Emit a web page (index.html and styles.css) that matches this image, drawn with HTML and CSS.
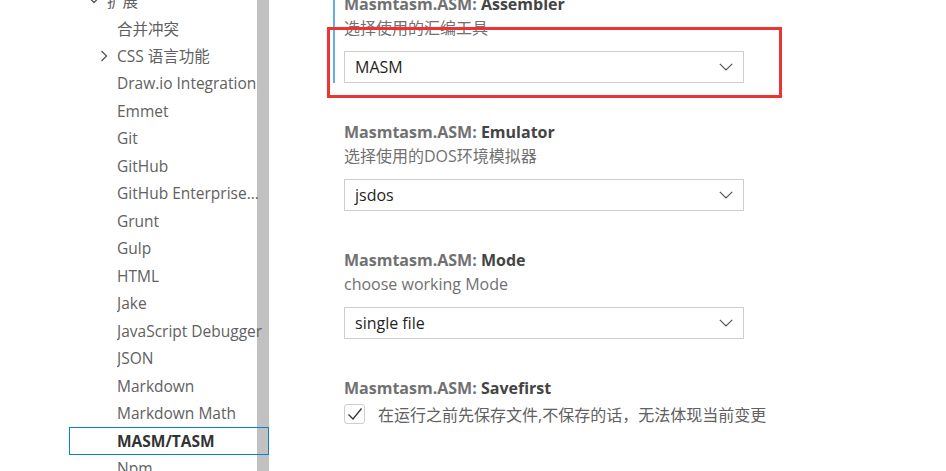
FILE: index.html
```html
<!DOCTYPE html>
<html lang="zh">
<head>
<meta charset="utf-8">
<title>Settings</title>
<link rel="stylesheet" href="styles.css">
</head>
<body>
<div class="page">
  <nav class="toc">
    <div class="scrollbar"></div>
    <ul class="tree">
      <li class="row lvl1"><span class="chev down"><svg viewBox="0 0 12 8" width="12" height="8"><path d="M1 1.5 L6 6.5 L11 1.5" fill="none" stroke="#555" stroke-width="1.3"/></svg></span><span class="label">扩展</span></li>
      <li class="row lvl2"><span class="label">合并冲突</span></li>
      <li class="row lvl2"><span class="chev right"><svg viewBox="0 0 8 12" width="8" height="12"><path d="M1.5 1 L6.5 6 L1.5 11" fill="none" stroke="#555" stroke-width="1.3"/></svg></span><span class="label">CSS 语言功能</span></li>
      <li class="row lvl2"><span class="label">Draw.io Integration</span></li>
      <li class="row lvl2"><span class="label">Emmet</span></li>
      <li class="row lvl2"><span class="label">Git</span></li>
      <li class="row lvl2"><span class="label">GitHub</span></li>
      <li class="row lvl2"><span class="label short">GitHub Enterprise Server Authentication</span></li>
      <li class="row lvl2"><span class="label">Grunt</span></li>
      <li class="row lvl2"><span class="label">Gulp</span></li>
      <li class="row lvl2"><span class="label">HTML</span></li>
      <li class="row lvl2"><span class="label">Jake</span></li>
      <li class="row lvl2"><span class="label">JavaScript Debugger</span></li>
      <li class="row lvl2"><span class="label">JSON</span></li>
      <li class="row lvl2"><span class="label">Markdown</span></li>
      <li class="row lvl2"><span class="label">Markdown Math</span></li>
      <li class="row lvl2 selected"><span class="label">MASM/TASM</span></li>
      <li class="row lvl2"><span class="label">Npm</span></li>
    </ul>
  </nav>
  <main class="settings">
    <section class="setting focused">
      <div class="title"><span class="cat">Masmtasm.ASM: </span><span class="name">Assembler</span></div>
      <div class="desc">选择使用的汇编工具</div>
      <div class="select"><span class="value">MASM</span><svg class="arrow" viewBox="0 0 14 8" width="14" height="8"><path d="M0.8 0.8 L7 7 L13.2 0.8" fill="none" stroke="#555" stroke-width="1.2"/></svg></div>
    </section>
    <section class="setting">
      <div class="title"><span class="cat">Masmtasm.ASM: </span><span class="name">Emulator</span></div>
      <div class="desc">选择使用的DOS环境模拟器</div>
      <div class="select"><span class="value">jsdos</span><svg class="arrow" viewBox="0 0 14 8" width="14" height="8"><path d="M0.8 0.8 L7 7 L13.2 0.8" fill="none" stroke="#555" stroke-width="1.2"/></svg></div>
    </section>
    <section class="setting">
      <div class="title"><span class="cat">Masmtasm.ASM: </span><span class="name">Mode</span></div>
      <div class="desc">choose working Mode</div>
      <div class="select"><span class="value">single file</span><svg class="arrow" viewBox="0 0 14 8" width="14" height="8"><path d="M0.8 0.8 L7 7 L13.2 0.8" fill="none" stroke="#555" stroke-width="1.2"/></svg></div>
    </section>
    <section class="setting">
      <div class="title"><span class="cat">Masmtasm.ASM: </span><span class="name">Savefirst</span></div>
      <div class="check-row">
        <span class="checkbox"><svg viewBox="0 0 18 18" width="18" height="18"><path d="M2.5 9.5 L7 14 L15.5 3.5" fill="none" stroke="#333" stroke-width="1.3"/></svg></span>
        <span class="check-label">在运行之前先保存文件,不保存的话，无法体现当前变更</span>
      </div>
    </section>
  </main>
</div>
<div class="annotation"></div>
</body>
</html>
```

FILE: styles.css
```css
html, body {
  margin: 0;
  padding: 0;
  background: #ffffff;
  overflow: hidden;
}
body {
  width: 946px;
  height: 471px;
  position: relative;
  font-family: "Open Sans", "Noto Sans CJK SC", sans-serif;
  font-size: 16px;
}
.page {
  display: flex;
  height: 471px;
  overflow: hidden;
}
.toc {
  position: relative;
  margin-left: 69px;
  width: 200px;
  flex: none;
  overflow: hidden;
  font-size: 15.5px;
}
.tree {
  position: relative;
  z-index: 1;
  list-style: none;
  margin: -13px 0 0 0;
  padding: 0;
}
.row {
  height: 27.5px;
  display: flex;
  align-items: center;
  box-sizing: border-box;
  color: #616161;
  white-space: nowrap;
  position: relative;
}
.row .label {
  overflow: hidden;
  text-overflow: ellipsis;
  white-space: nowrap;
  display: block;
  max-width: 152px;
}
.row .label.short { max-width: 144px; }
.lvl1 { padding-left: 38px; }
.lvl2 { padding-left: 48px; }
.chev {
  position: absolute;
  display: flex;
  align-items: center;
}
.lvl1 .chev { left: 19px; top: 9px; }
.lvl2 .chev { left: 31px; top: 8px; }
.row.selected {
  border: 1px solid #0a7fd6;
  padding-left: 47px;
  color: #333333;
  font-weight: 700;
}
.scrollbar {
  position: absolute;
  right: 0;
  top: 0;
  width: 12px;
  height: 100%;
  background: #c1c1c1;
  z-index: 0;
}
.settings {
  flex: 1;
  margin-top: -8px;
  padding-left: 64px;
}
.setting {
  border-left: 2px solid transparent;
  padding-left: 9px;
  margin-bottom: 37.5px;
}
.setting.focused {
  border-left-color: #64aee4;
}
.title {
  height: 24px;
  line-height: 24px;
  font-weight: 700;
  white-space: nowrap;
}
.title .cat { color: #717171; }
.title .name { color: #444444; }
.desc {
  height: 24px;
  line-height: 24px;
  color: #717171;
}
.select {
  margin-top: 10.5px;
  width: 400px;
  height: 32px;
  box-sizing: border-box;
  border: 1px solid #cecece;
  display: flex;
  align-items: center;
  justify-content: space-between;
  padding: 0 10px 0 10px;
  color: #1f1f1f;
}
.check-row {
  margin-top: 3.5px;
  display: flex;
  align-items: center;
  height: 20px;
}
.checkbox {
  width: 21px;
  height: 20px;
  box-sizing: border-box;
  border: 1px solid #cecece;
  border-radius: 3px;
  display: flex;
  align-items: center;
  justify-content: center;
  flex: none;
}
.check-label {
  margin-left: 13px;
  color: #616161;
  white-space: nowrap;
}
.annotation {
  position: absolute;
  left: 327px;
  top: 27px;
  width: 455px;
  height: 71px;
  box-sizing: border-box;
  border: 3px solid #ee3333;
  pointer-events: none;
}
```
